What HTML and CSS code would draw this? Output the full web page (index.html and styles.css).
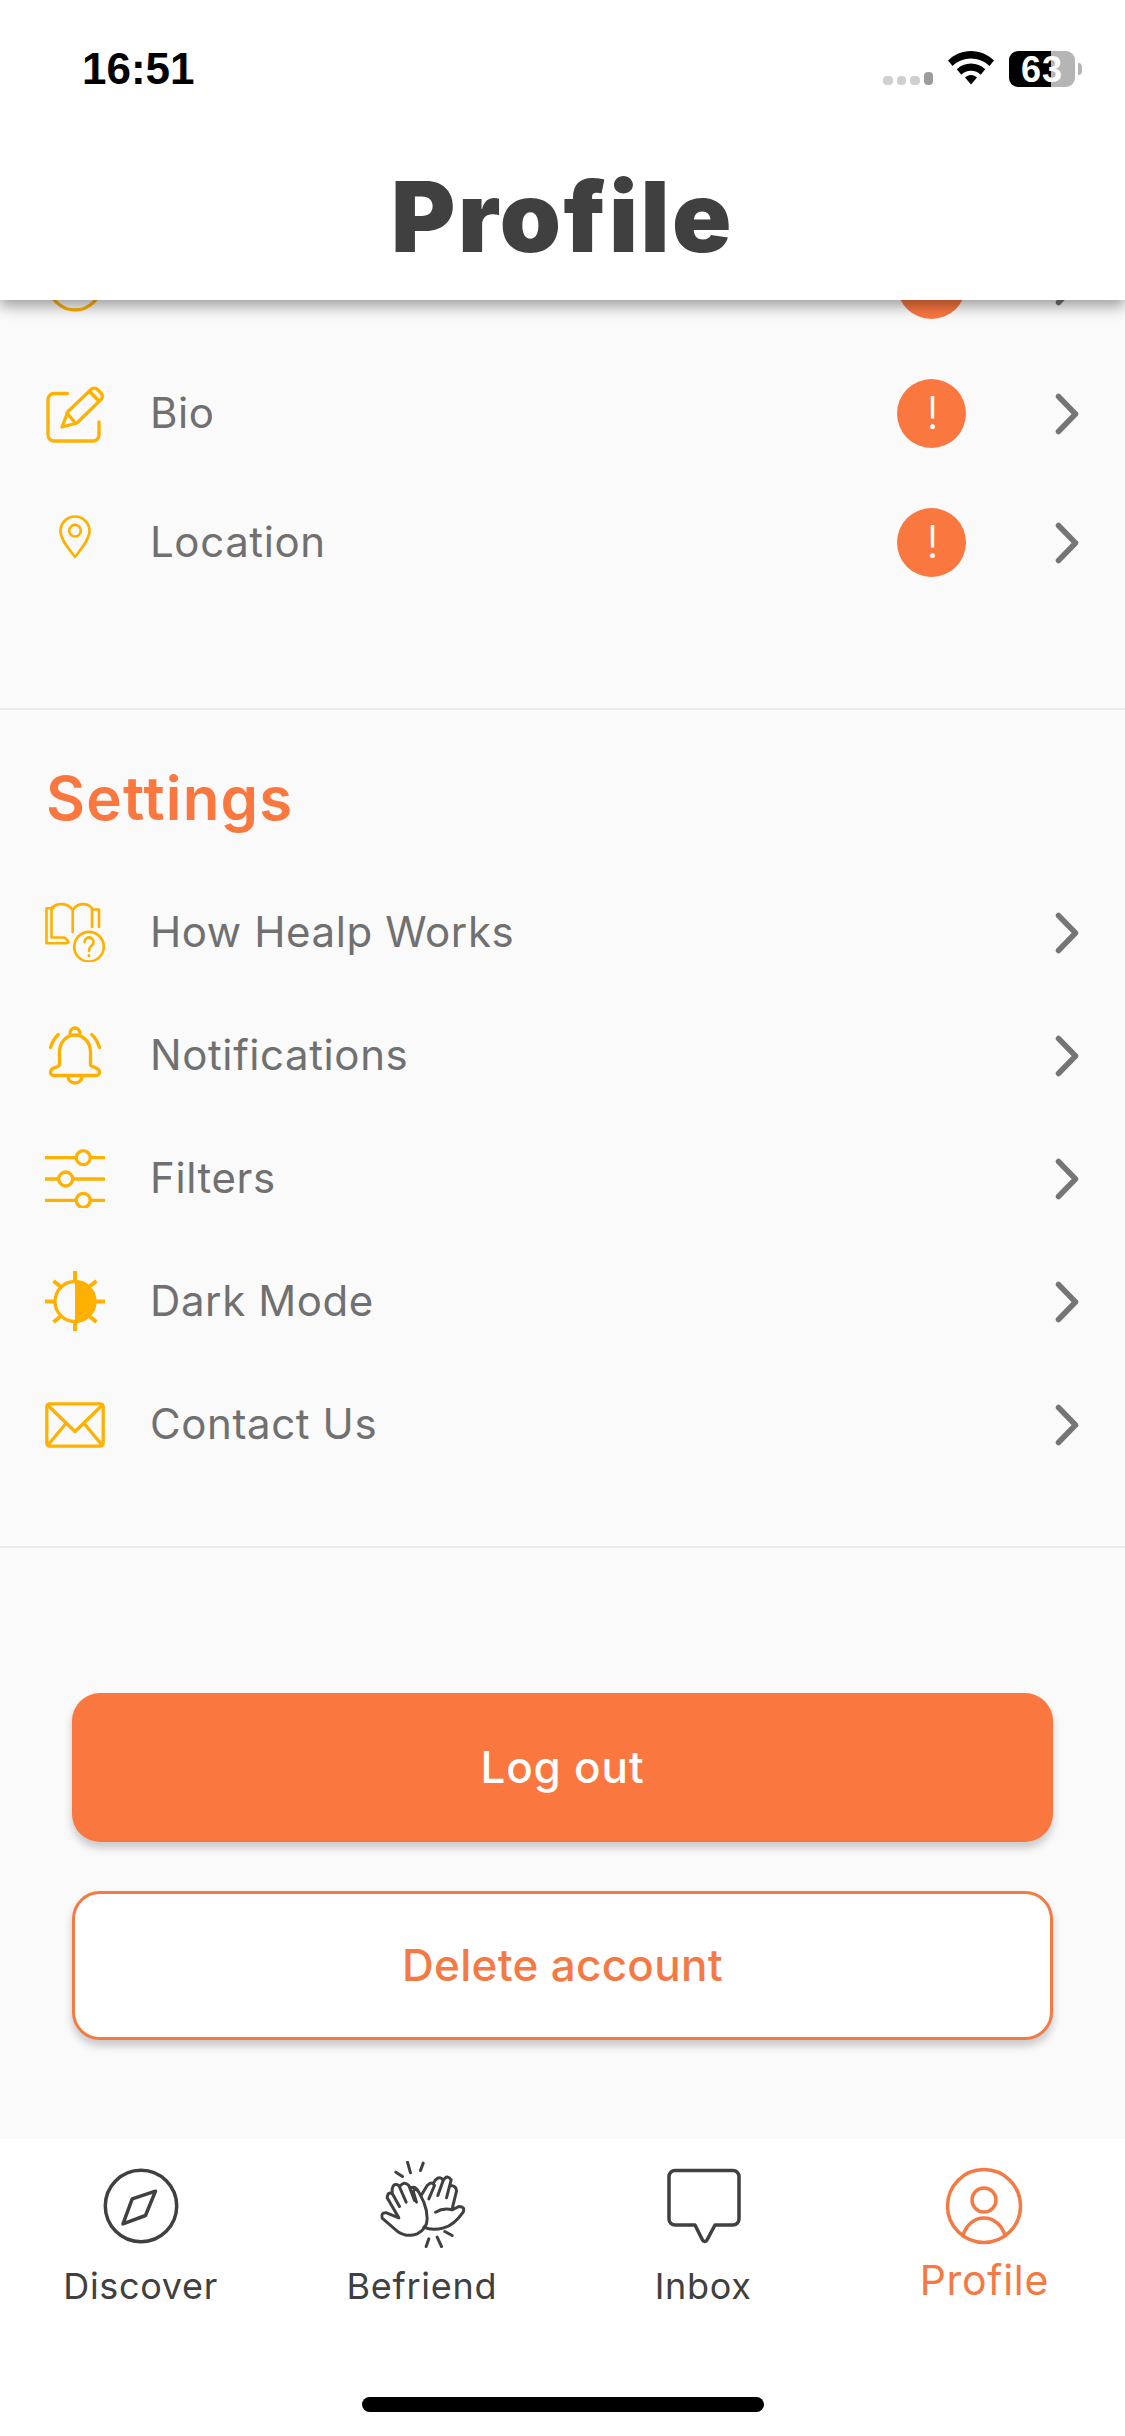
FILE: index.html
```html
<!DOCTYPE html>
<html lang="en">
<head>
<meta charset="utf-8">
<title>Profile</title>
<link rel="stylesheet" href="styles.css">
</head>
<body>
<div class="phone">
  <header class="top">
    <div class="status">
      <span class="time">16:51</span>
      <div class="status-right">
        <div class="signal"><i></i><i></i><i></i><i class="on"></i></div>
        <svg class="wifi" viewBox="0 0 46 34" width="46" height="34"><path d="M23 0C14 0 6 3.600 0 9.500L4.600 15C9.500 10.300 16 7.500 23 7.500S36.500 10.300 41.400 15L46 9.500C40 3.600 32 0 23 0Z"/><path d="M23 12.500C17.500 12.500 12.500 14.700 8.800 18.300L13.300 23.700C15.800 21.200 19.200 19.700 23 19.700S30.200 21.200 32.700 23.700L37.200 18.300C33.500 14.700 28.500 12.500 23 12.500Z"/><path d="M23 24C20.700 24 18.600 24.900 17 26.500L23 33.500L29 26.500C27.400 24.900 25.300 24 23 24Z"/></svg>
        <div class="battery"><span class="battery-body">63</span><i class="battery-cap"></i></div>
      </div>
    </div>
    <h1 class="title">Profile</h1>
  </header>

  <main class="content">
    <section class="group group-profile">
      <div class="row row-tall">
        <svg class="icon" viewBox="0 0 60 60"><circle cx="30" cy="30" r="26"/><path d="M30 14V30L42 38"/></svg>
        <span class="label"></span>
        <span class="badge"></span>
        <svg class="chev" viewBox="0 0 24 42"><path d="M3.500 3.500L20.500 21L3.500 38.500"/></svg>
      </div>
      <div class="row row-tall">
        <svg class="icon" viewBox="0 0 60 60"><path d="M22.500 10.500H9a6 6 0 0 0-6 6V52a6 6 0 0 0 6 6h39a6 6 0 0 0 6-6V39"/><path d="M17 44L23 28.500L46 6.500a4.500 4.500 0 0 1 6.500 0L56 10a4.500 4.500 0 0 1 0 6.500L32 40Z"/><path d="M44.500 8.500L54 18M22 30L30 39.500"/></svg>
        <span class="label">Bio</span>
        <span class="badge">!</span>
        <svg class="chev" viewBox="0 0 24 42"><path d="M3.500 3.500L20.500 21L3.500 38.500"/></svg>
      </div>
      <div class="row row-tall">
        <svg class="icon icon-thin" viewBox="0 0 60 60"><path d="M30 45C25 38 15.500 28 15.500 19A14.500 14.500 0 0 1 44.500 19C44.500 28 35 38 30 45Z"/><circle cx="30" cy="18.700" r="5.800"/></svg>
        <span class="label">Location</span>
        <span class="badge">!</span>
        <svg class="chev" viewBox="0 0 24 42"><path d="M3.500 3.500L20.500 21L3.500 38.500"/></svg>
      </div>
    </section>

    <section class="group group-settings">
      <h2 class="heading">Settings</h2>
      <div class="row">
        <svg class="icon icon-thin" viewBox="0 0 60 60"><path d="M8.300 6.300H1.500V41.300H21.700"/><path d="M6.500 6V35.500H17.500C20.500 35.500 22.500 37.500 23.500 40.500"/><path d="M6.500 6C12 0.500 22.500 0.500 27.700 8C33 0.500 42 0.500 47 6V25"/><path d="M27.700 8V30M47 7.500H54V25"/><circle cx="44" cy="44.700" r="14.800"/><path d="M39.500 40a4.500 4.500 0 1 1 7 3.700c-2 1.500-2.500 3-2.500 5.300M44 53.200V54"/></svg>
        <span class="label">How Healp Works</span>
        <svg class="chev" viewBox="0 0 24 42"><path d="M3.500 3.500L20.500 21L3.500 38.500"/></svg>
      </div>
      <div class="row">
        <svg class="icon" viewBox="0 0 60 60"><path d="M14.500 40V27a15.500 17 0 0 1 31 0V40C47 43 55 42 54.500 47.500a3 3 0 0 1-3 3H8.500a3 3 0 0 1-3-3C5 42 13 43 14.500 40Z"/><path d="M25 8.500a5 5.500 0 0 1 10 0M23 51.500a7 6.500 0 0 0 14 0M13.300 9.500C9.500 13 7 17.500 5.500 22.500M46.700 9.500C50.500 13 53 17.500 54.500 22.500"/></svg>
        <span class="label">Notifications</span>
        <svg class="chev" viewBox="0 0 24 42"><path d="M3.500 3.500L20.500 21L3.500 38.500"/></svg>
      </div>
      <div class="row">
        <svg class="icon" viewBox="0 0 60 60"><path d="M1 9.700H31M45.500 9.700H59M1 31H13.500M28 31H59M1 52.300H31M45.500 52.300H59"/><circle cx="38.300" cy="9.700" r="7"/><circle cx="20.700" cy="31" r="7"/><circle cx="38.300" cy="52.300" r="7"/></svg>
        <span class="label">Filters</span>
        <svg class="chev" viewBox="0 0 24 42"><path d="M3.500 3.500L20.500 21L3.500 38.500"/></svg>
      </div>
      <div class="row">
        <svg class="icon icon-sun" viewBox="0 0 60 60"><circle cx="30" cy="30.500" r="20"/><path class="solid" d="M30 10.500a20 20 0 0 1 0 40Z"/><path class="rays" d="M30 0V10M30 51V60.500M0 30.500H9M51 30.500H60M8.500 10L15.500 15.500M51.500 10L44.500 15.500M8.500 51L15.500 45.500M51.500 51L44.500 45.500"/></svg>
        <span class="label">Dark Mode</span>
        <svg class="chev" viewBox="0 0 24 42"><path d="M3.500 3.500L20.500 21L3.500 38.500"/></svg>
      </div>
      <div class="row">
        <svg class="icon" viewBox="0 0 60 60"><rect x="1.800" y="9.800" width="56.400" height="42.400" rx="3"/><path d="M2.500 11L30 37.500L57.500 11M3 51L20.500 30M57 51L39.500 30"/></svg>
        <span class="label">Contact Us</span>
        <svg class="chev" viewBox="0 0 24 42"><path d="M3.500 3.500L20.500 21L3.500 38.500"/></svg>
      </div>
    </section>

    <section class="actions">
      <button class="btn btn-solid">Log out</button>
      <button class="btn btn-outline">Delete account</button>
    </section>
  </main>

  <nav class="tabbar">
    <div class="tabs">
      <div class="tab">
        <svg class="tab-icon" viewBox="0 0 90 90"><circle cx="45" cy="45" r="35.700"/><path d="M27 62.800L36.200 37.800L59.500 30.200L49.500 54.500Z"/></svg>
        <span class="tab-label">Discover</span>
      </div>
      <div class="tab">
        <svg class="tab-icon tab-hands" viewBox="1039.500 121.500 270 270"><path d="M1105 292L1068 277Q1050 275 1055 293L1100 332Q1130 352 1160 340Q1190 325 1190 295Q1190 270 1180 245L1165 215Q1155 200 1148 212L1158 245M1105 292L1070 232Q1072 210 1087 222L1107 258M1085 220L1085 205Q1090 185 1105 195L1127 245M1108 198Q1120 180 1135 195L1152 240M1138 203Q1155 195 1165 215"/><path d="M1172 225L1190 195Q1205 180 1212 195L1195 235M1208 190L1215 178Q1230 165 1238 180L1222 225M1238 180Q1250 160 1262 178L1248 232M1258 195Q1278 195 1278 212L1265 265M1215 275Q1240 260 1265 268L1285 258Q1305 258 1298 275Q1270 315 1240 322Q1205 332 1180 320"/><path d="M1131 125L1140 157M1096 155L1116 168M1178 128L1170 150M1220 350L1233 378M1195 355L1187 378M1243 333L1265 345"/></svg>
        <span class="tab-label">Befriend</span>
      </div>
      <div class="tab">
        <svg class="tab-icon" viewBox="0 0 90 90"><path d="M17 9.500H75a6 6 0 0 1 6 6V58a6 6 0 0 1-6 6H57L49 79a2.500 2.500 0 0 1-4.500 0L37 64H17a6 6 0 0 1-6-6V15.500a6 6 0 0 1 6-6Z"/></svg>
        <span class="tab-label">Inbox</span>
      </div>
      <div class="tab tab-active">
        <svg class="tab-icon" viewBox="0 0 90 90"><circle cx="45" cy="45" r="36.500"/><circle cx="45" cy="39" r="12"/><path d="M24 74.500A22 25 0 0 1 66 74.500"/></svg>
        <span class="tab-label">Profile</span>
      </div>
    </div>
    <div class="home-indicator"></div>
  </nav>
</div>
</body>
</html>
```

FILE: styles.css
```css
* { box-sizing: border-box; }
html, body { margin: 0; padding: 0; }
body { width: 1125px; height: 2436px; overflow: hidden; background: #fafafa; font-family: Inter, "Open Sans", sans-serif; }

.phone { width: 1125px; height: 2436px; display: flex; flex-direction: column; }

.top { position: relative; z-index: 2; height: 300px; flex: none; background: #fff; box-shadow: 0 6px 14px rgba(0,0,0,.38); }
.status { display: flex; justify-content: space-between; align-items: flex-start; padding: 46px 43px 0 82px; height: 159px; }
.time { font-family: "Liberation Sans", sans-serif; font-weight: 700; font-size: 44px; line-height: 46px; color: #000; }
.status-right { display: flex; align-items: flex-end; height: 36px; margin-top: 5px; }
.signal { display: flex; gap: 4px; align-items: flex-end; height: 13px; margin-bottom: 2px; }
.signal i { width: 9.500px; height: 9px; border-radius: 4px; background: #cfcfcf; }
.signal i.on { height: 13px; background: #9c9c9c; }
.wifi { display: block; margin: 0 15px 2px 15px; fill: #000; }
.battery { display: flex; align-items: center; }
.battery-body { display: block; width: 66px; height: 36px; border-radius: 9px; background: linear-gradient(90deg, #000 63.500%, #b5b5b5 63.500%); color: #fff; font-family: "Liberation Sans", sans-serif; font-weight: 700; font-size: 36px; line-height: 37px; letter-spacing: 1px; text-align: center; }
.battery-cap { display: block; width: 4px; height: 12px; margin-left: 3px; border-radius: 0 6px 6px 0; background: #b5b5b5; }
.title { margin: 0; text-align: center; font-family: Inter, sans-serif; font-weight: 900; font-size: 98px; line-height: 116px; color: #404040; letter-spacing: 2.500px; }

.content { flex: 1; min-height: 0; overflow: hidden; background: #fafafa; }
.group { border-bottom: 2px solid #ebebeb; }
.group-profile { margin-top: -80.500px; padding-bottom: 101px; }
.group-settings { padding-bottom: 60px; }
.heading { margin: 0; height: 161px; padding: 55px 0 0 46px; font-weight: 600; font-size: 60px; line-height: 66px; letter-spacing: 1.200px; color: #fb7740; }

.row { display: flex; align-items: center; height: 123px; padding: 0 46px 0 45px; }
.row-tall { height: 129px; }
.icon { width: 60px; height: 60px; flex: none; fill: none; stroke: #ffb000; stroke-width: 3.300; stroke-linecap: round; stroke-linejoin: round; }
.icon-thin { stroke-width: 2.600; }
.icon .solid { fill: #ffb000; stroke: none; }
.icon-sun .rays { stroke-width: 4; stroke-linecap: butt; }
.label { flex: 1; margin-left: 45px; font-size: 42px; line-height: 50px; letter-spacing: .600px; color: #707070; }
.badge { width: 69px; height: 69px; flex: none; margin-right: 89px; border-radius: 50%; background: #fb7740; color: #fff; text-align: center; font-size: 45px; font-weight: 300; line-height: 68px; padding-left: 2px; }
.chev { width: 24px; height: 42px; flex: none; margin-top: 1px; fill: none; stroke: #757575; stroke-width: 5.500; stroke-linecap: round; stroke-linejoin: round; }

.actions { display: flex; flex-direction: column; gap: 49px; padding: 145px 72px 0; }
.btn { display: block; width: 100%; height: 149px; border-radius: 28px; font-family: Inter, sans-serif; font-size: 44px; font-weight: 500; box-shadow: 0 6px 8px rgba(0,0,0,.2); padding: 0; }
.btn-solid { background: #fb7740; border: 0; color: #fff; letter-spacing: .800px; }
.btn-outline { background: #fff; border: 3px solid #f47a45; color: #f47a45; letter-spacing: .300px; }

.tabbar { flex: none; height: 297px; background: #fff; display: flex; flex-direction: column; align-items: center; }
.tabs { display: grid; grid-template-columns: repeat(4, 1fr); width: 100%; padding-top: 21.500px; }
.tab { display: flex; flex-direction: column; align-items: center; }
.tab-icon { display: block; width: 90px; height: 90px; fill: none; stroke: #404040; stroke-width: 3.500; stroke-linecap: round; stroke-linejoin: round; }
.tab-hands { stroke-width: 9; }
.tab-label { margin-top: 10px; font-size: 36px; line-height: 50px; letter-spacing: .700px; color: #404040; }
.tab-active .tab-icon { stroke: #f47a45; }
.tab-active .tab-label { margin-top: 4px; font-size: 41px; color: #f47a45; }
.home-indicator { width: 402px; height: 15px; margin-top: auto; margin-bottom: 24px; border-radius: 8px; background: #000; }
```
